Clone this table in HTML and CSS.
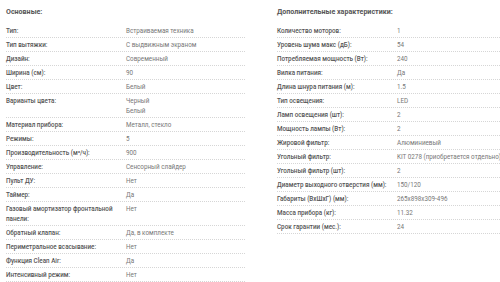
FILE: index.html
```html
<!DOCTYPE html>
<html lang="ru">
<head>
<meta charset="utf-8">
<link rel="stylesheet" href="styles.css">
</head>
<body>
<div class="specs">
  <section class="group">
    <h3 class="title">Основные:</h3>
    <div class="row"><div class="label">Тип:</div><div class="value">Встраиваемая техника</div></div>
    <div class="row"><div class="label">Тип вытяжки:</div><div class="value">С выдвижным экраном</div></div>
    <div class="row"><div class="label">Дизайн:</div><div class="value">Современный</div></div>
    <div class="row"><div class="label">Ширина (см):</div><div class="value">90</div></div>
    <div class="row"><div class="label">Цвет:</div><div class="value">Белый</div></div>
    <div class="row"><div class="label">Варианты цвета:</div><div class="value">Черный<br>Белый</div></div>
    <div class="row"><div class="label">Материал прибора:</div><div class="value">Металл, стекло</div></div>
    <div class="row"><div class="label">Режимы:</div><div class="value">5</div></div>
    <div class="row"><div class="label">Производительность (м³/ч):</div><div class="value">900</div></div>
    <div class="row"><div class="label">Управление:</div><div class="value">Сенсорный слайдер</div></div>
    <div class="row"><div class="label">Пульт ДУ:</div><div class="value">Нет</div></div>
    <div class="row"><div class="label">Таймер:</div><div class="value">Да</div></div>
    <div class="row"><div class="label">Газовый амортизатор фронтальной панели:</div><div class="value">Нет</div></div>
    <div class="row"><div class="label">Обратный клапан:</div><div class="value">Да, в комплекте</div></div>
    <div class="row"><div class="label">Периметральное всасывание:</div><div class="value">Нет</div></div>
    <div class="row"><div class="label">Функция Clean Air:</div><div class="value">Да</div></div>
    <div class="row"><div class="label">Интенсивный режим:</div><div class="value">Нет</div></div>
  </section>
  <section class="group">
    <h3 class="title">Дополнительные характеристики:</h3>
    <div class="row"><div class="label">Количество моторов:</div><div class="value">1</div></div>
    <div class="row"><div class="label">Уровень шума макс (дБ):</div><div class="value">54</div></div>
    <div class="row"><div class="label">Потребляемая мощность (Вт):</div><div class="value">240</div></div>
    <div class="row"><div class="label">Вилка питания:</div><div class="value">Да</div></div>
    <div class="row"><div class="label">Длина шнура питания (м):</div><div class="value">1.5</div></div>
    <div class="row"><div class="label">Тип освещения:</div><div class="value">LED</div></div>
    <div class="row"><div class="label">Ламп освещения (шт):</div><div class="value">2</div></div>
    <div class="row"><div class="label">Мощность лампы (Вт):</div><div class="value">2</div></div>
    <div class="row"><div class="label">Жировой фильтр:</div><div class="value">Алюминиевый</div></div>
    <div class="row"><div class="label">Угольный фильтр:</div><div class="value">KIT 0278 (приобретается отдельно)</div></div>
    <div class="row"><div class="label">Угольный фильтр (шт):</div><div class="value">2</div></div>
    <div class="row"><div class="label">Диаметр выходного отверстия (мм):</div><div class="value">150/120</div></div>
    <div class="row"><div class="label">Габариты (ВхШхГ) (мм):</div><div class="value">265x898x309-496</div></div>
    <div class="row"><div class="label">Масса прибора (кг):</div><div class="value">11.32</div></div>
    <div class="row"><div class="label">Срок гарантии (мес.):</div><div class="value">24</div></div>
  </section>
</div>
</body>
</html>
```
FILE: styles.css
```css
html, body {
  margin: 0;
  padding: 0;
  background: #fff;
}
body {
  font-family: Roboto, "Liberation Sans", Arial, sans-serif;
  overflow: hidden;
}
.specs {
  display: grid;
  grid-template-columns: 239px 223px;
  column-gap: 32px;
  padding-left: 6px;
}
.title {
  margin: 0;
  padding: 7px 0 7px;
  font-size: 7.1px;
  line-height: 10px;
  font-weight: 700;
  color: #555;
}
.row {
  display: grid;
  grid-template-columns: 120px 1fr;
  padding: 2px 0 1px;
  border-bottom: 1px dotted #d6d6d6;
  font-size: 6.3px;
  line-height: 10px;
}
.label {
  font-weight: 500;
  color: #555;
  padding-right: 2px;
}
.value {
  color: #777;
  white-space: nowrap;
}
```
